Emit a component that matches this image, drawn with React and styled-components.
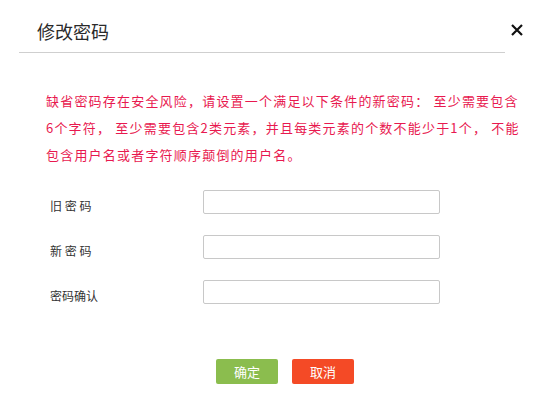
import React from 'react';
import styled, { createGlobalStyle } from 'styled-components';

const GlobalStyle = createGlobalStyle`
  html, body {
    margin: 0;
    padding: 0;
    background: #fff;
  }
  body {
    font-family: "Microsoft YaHei", "Noto Sans CJK SC", "Liberation Sans", sans-serif;
  }
`;

const fields = ['旧 密 码', '新 密 码', '密码确认'];

const App = () => (
  <Dialog>
    <GlobalStyle />
    <Header>
      <TitleBar>
        <Title>修改密码</Title>
      </TitleBar>
      <Close aria-label="close">
        <svg width="12" height="12" viewBox="0 0 12 12">
          <path d="M1 1 L11 11 M11 1 L1 11" stroke="#111" strokeWidth="2.2" />
        </svg>
      </Close>
    </Header>
    <Notice>
      缺省密码存在安全风险，请设置一个满足以下条件的新密码： 至少需要包含6个字符， 至少需要包含2类元素，并且每类元素的个数不能少于1个， 不能包含用户名或者字符顺序颠倒的用户名。
    </Notice>
    <Form>
      {fields.map((f) => (
        <Row key={f}>
          <Label>{f}</Label>
          <Input type="password" />
        </Row>
      ))}
    </Form>
    <Actions>
      <Button $bg="#8bbd4e">确定</Button>
      <Button $bg="#f44a26">取消</Button>
    </Actions>
  </Dialog>
);

const Dialog = styled.div`
  width: 559px;
  height: 416px;
  background: #fff;
  display: flex;
  flex-direction: column;
`;

const Header = styled.div`
  display: flex;
  align-items: flex-start;
`;

const TitleBar = styled.div`
  margin-left: 19px;
  width: 486px;
  height: 53px;
  box-sizing: border-box;
  border-bottom: 1px solid #cfcfcf;
  padding: 18px 0 0 18px;
`;

const Title = styled.h1`
  margin: 0;
  font-size: 18px;
  font-weight: 400;
  line-height: 26px;
  color: #2a2a2a;
`;

const Close = styled.button`
  margin: 24px 0 0 6px;
  width: 12px;
  height: 12px;
  padding: 0;
  border: none;
  background: none;
  display: flex;
  cursor: pointer;
`;

const Notice = styled.p`
  margin: 34px 0 0;
  padding: 0 38px 0 46px;
  font-size: 13px;
  line-height: 27px;
  letter-spacing: 1.2px;
  color: #e8194f;
`;

const Form = styled.div`
  margin-top: 22px;
  display: flex;
  flex-direction: column;
  gap: 21px;
`;

const Row = styled.div`
  display: flex;
  align-items: center;
  padding-left: 50px;
`;

const Label = styled.span`
  width: 153px;
  padding-top: 6px;
  font-size: 12px;
  color: #333;
`;

const Input = styled.input`
  width: 237px;
  height: 24px;
  box-sizing: border-box;
  border: 1px solid #c8c8c8;
  border-radius: 2px;
  outline: none;
`;

const Actions = styled.div`
  margin-top: 55px;
  display: flex;
  justify-content: center;
  gap: 14px;
  padding-left: 11px;
`;

const Button = styled.button`
  width: 62px;
  height: 25px;
  border: none;
  border-radius: 2px;
  background: ${(p) => p.$bg};
  color: #fff;
  font-family: inherit;
  font-size: 13px;
  cursor: pointer;
`;

export default App;
